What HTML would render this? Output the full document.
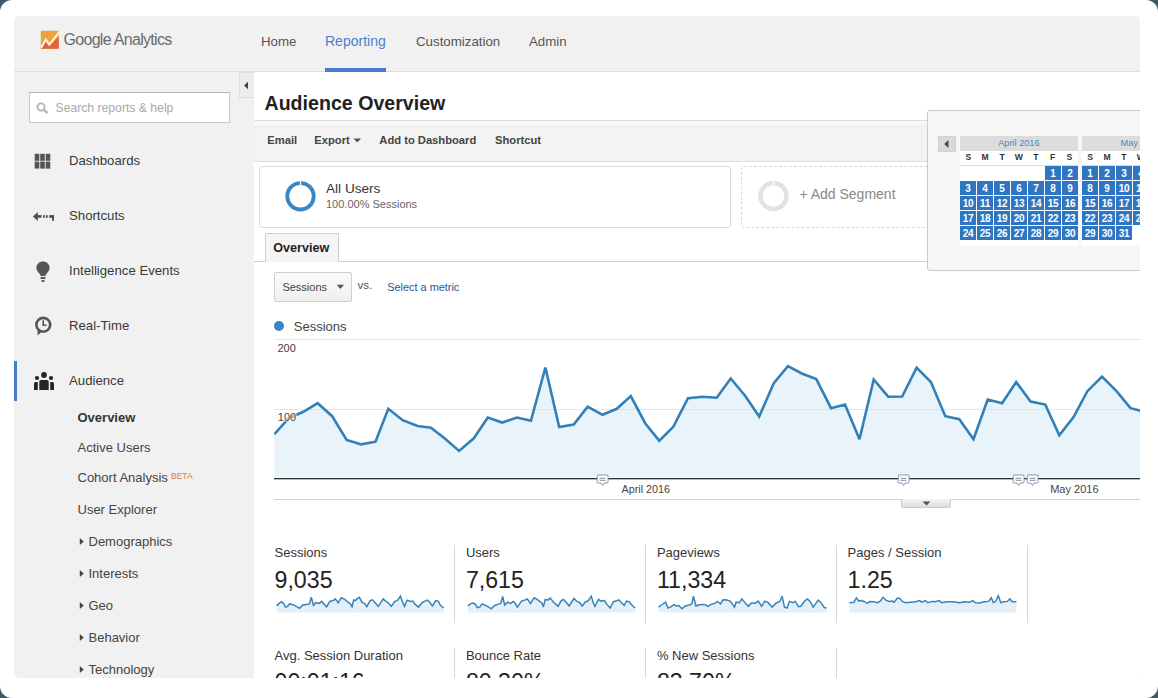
<!DOCTYPE html>
<html><head><meta charset="utf-8"><style>
html,body{margin:0;padding:0;width:1158px;height:698px;overflow:hidden;background:#fff}
body{position:relative;font-family:"Liberation Sans", sans-serif}
.b{position:absolute}
.t{position:absolute;white-space:nowrap}
</style></head><body>
<div class="b" style="left:0;top:0;width:1158px;height:698px;background:#3e5a64"></div>
<div class="b" style="left:0;top:0;width:1158px;height:698px;background:#fff;border-radius:12px"></div>
<div class="b" id="win" style="left:14px;top:16px;width:1126px;height:662px;background:#f1f1f1;border-radius:5px;overflow:hidden">
</div>
<div class="b" style="left:14px;top:16px;width:1126px;height:662px;border-radius:5px;overflow:hidden"><div class="b" style="left:-14px;top:-16px;width:1158px;height:698px">
<div class="b" style="left:14px;top:71px;width:1126px;height:1px;background:#dedede"></div>
<svg class="b" style="left:40px;top:30px" width="20" height="20" viewBox="0 0 20 20">
<rect x="0.8" y="0.8" width="18" height="18" rx="1" fill="#eda23c"/>
<path d="M0.8 18.8 L0.8 16.5 L5.8 11.2 L9.3 16.2 L18.8 6.5 L18.8 18.8 Z" fill="#e2653a"/>
<path d="M1.2 17.8 L5.8 9.6 L9.3 14.6 L19.2 2.2" stroke="#fdf3e6" stroke-width="2" fill="none" stroke-linejoin="miter"/>
</svg>
<div class="t" style="left:63.50px;top:31.96px;font-size:16px;line-height:16px;color:#6b6b6b;letter-spacing:-0.7px">Google Analytics</div>
<div class="t" style="left:261.00px;top:34.74px;font-size:13.3px;line-height:13.3px;color:#555;">Home</div>
<div class="t" style="left:325.00px;top:34.15px;font-size:14px;line-height:14px;color:#4a7fcf;">Reporting</div>
<div class="t" style="left:416.00px;top:34.74px;font-size:13.3px;line-height:13.3px;color:#555;">Customization</div>
<div class="t" style="left:529.00px;top:34.74px;font-size:13.3px;line-height:13.3px;color:#555;">Admin</div>
<div class="b" style="left:325px;top:68px;width:61px;height:4px;background:#4a7bd4"></div>
<div class="b" style="left:29px;top:92px;width:201px;height:31px;background:#fff;border:1px solid #c9c9c9;border-top-color:#b5b5b5;box-sizing:border-box"></div>
<svg class="b" style="left:36px;top:102px" width="14" height="12" viewBox="0 0 14 12">
<circle cx="5" cy="5" r="3.6" stroke="#b3b3b3" stroke-width="1.8" fill="none"/>
<path d="M7.6 7.6 L11.5 11" stroke="#b3b3b3" stroke-width="2.4"/>
</svg>
<div class="t" style="left:55.50px;top:101.97px;font-size:12.2px;line-height:12.2px;color:#a9a9a9;">Search reports &amp; help</div>
<div class="t" style="left:69.00px;top:153.83px;font-size:13.2px;line-height:13.2px;color:#383838;">Dashboards</div>
<div class="t" style="left:69.00px;top:208.83px;font-size:13.2px;line-height:13.2px;color:#383838;">Shortcuts</div>
<div class="t" style="left:69.00px;top:263.83px;font-size:13.2px;line-height:13.2px;color:#383838;">Intelligence Events</div>
<div class="t" style="left:69.00px;top:318.83px;font-size:13.2px;line-height:13.2px;color:#383838;">Real-Time</div>
<div class="t" style="left:69.00px;top:373.83px;font-size:13.2px;line-height:13.2px;color:#383838;">Audience</div>
<svg class="b" style="left:34px;top:153px" width="18" height="17" viewBox="0 0 18 17">
<g fill="#555">
<rect x="0.7" y="0.8" width="4.6" height="7" /><rect x="6.2" y="0.8" width="4.6" height="7"/><rect x="11.7" y="0.8" width="4.6" height="7"/>
<rect x="0.7" y="8.6" width="4.6" height="7" /><rect x="6.2" y="8.6" width="4.6" height="7"/><rect x="11.7" y="8.6" width="4.6" height="7"/>
</g></svg>
<svg class="b" style="left:32px;top:210px" width="24" height="13" viewBox="0 0 24 13">
<g fill="#4f4f4f">
<path d="M0.8 6.5 L5.9 2.1 L5.9 10.9 Z"/>
<rect x="5.5" y="5.1" width="4" height="2.7"/>
<rect x="11.1" y="5.1" width="1.7" height="2.7"/><rect x="13.9" y="5.1" width="1.8" height="2.7"/>
<rect x="17.2" y="5.1" width="4.8" height="2.7"/><rect x="20.1" y="5.1" width="1.9" height="5.7"/>
</g></svg>
<svg class="b" style="left:35px;top:260px" width="16" height="24" viewBox="0 0 16 24">
<g fill="#555">
<path d="M8 1.6 C4.3 1.6 1.4 4.3 1.4 7.9 C1.4 10.6 3.3 12.2 4.6 13.7 C5.3 14.6 5.6 15.2 5.6 16 L10.4 16 C10.4 15.2 10.7 14.6 11.4 13.7 C12.7 12.2 14.6 10.6 14.6 7.9 C14.6 4.3 11.7 1.6 8 1.6 Z"/>
<rect x="5.6" y="17" width="4.8" height="2"/><rect x="6.6" y="20" width="2.8" height="2"/>
</g></svg>
<svg class="b" style="left:34px;top:315px" width="20" height="22" viewBox="0 0 20 22">
<circle cx="9.3" cy="9.8" r="6.9" stroke="#555" stroke-width="2.6" fill="none"/>
<path d="M3.6 13.5 L3.6 20.5 L8.5 16" fill="#555"/>
<path d="M9.2 5.3 L9.2 10.3 L12.6 10.3" stroke="#555" stroke-width="1.6" fill="none"/>
</svg>
<svg class="b" style="left:33px;top:371px" width="22" height="20" viewBox="0 0 22 20">
<g fill="#252525">
<circle cx="11" cy="4" r="2.9"/><circle cx="4" cy="7" r="2.1"/><circle cx="18" cy="7" r="2.1"/>
<path d="M6.3 10.5 Q6.3 9 7.8 9 L14.2 9 Q15.7 9 15.7 10.5 L15.7 19 L6.3 19 Z"/>
<path d="M1 12.5 Q1 11 2.5 11 L4.8 11 L4.8 19 L1 19 Z"/>
<path d="M17.2 11 L19.5 11 Q21 11 21 12.5 L21 19 L17.2 19 Z"/>
</g></svg>
<div class="b" style="left:14px;top:361px;width:3px;height:40px;background:#4a7bd4"></div>
<div class="t" style="left:77.50px;top:411.40px;font-size:13px;line-height:13px;color:#333;font-weight:bold;">Overview</div>
<div class="t" style="left:77.50px;top:441.00px;font-size:13px;line-height:13px;color:#444;">Active Users</div>
<div class="t" style="left:77.50px;top:471.20px;font-size:13px;line-height:13px;color:#444;">Cohort Analysis</div>
<div class="t" style="left:171.00px;top:471.80px;font-size:8.5px;line-height:8.5px;color:#e07a3a;">BETA</div>
<div class="t" style="left:77.50px;top:503.00px;font-size:13px;line-height:13px;color:#444;">User Explorer</div>
<svg class="b" style="left:79px;top:537px" width="6" height="9" viewBox="0 0 6 9"><path d="M0.8 1 L4.8 4.5 L0.8 8 Z" fill="#444"/></svg>
<div class="t" style="left:88.50px;top:535.00px;font-size:13px;line-height:13px;color:#444;">Demographics</div>
<svg class="b" style="left:79px;top:569px" width="6" height="9" viewBox="0 0 6 9"><path d="M0.8 1 L4.8 4.5 L0.8 8 Z" fill="#444"/></svg>
<div class="t" style="left:88.50px;top:567.00px;font-size:13px;line-height:13px;color:#444;">Interests</div>
<svg class="b" style="left:79px;top:601px" width="6" height="9" viewBox="0 0 6 9"><path d="M0.8 1 L4.8 4.5 L0.8 8 Z" fill="#444"/></svg>
<div class="t" style="left:88.50px;top:599.00px;font-size:13px;line-height:13px;color:#444;">Geo</div>
<svg class="b" style="left:79px;top:633px" width="6" height="9" viewBox="0 0 6 9"><path d="M0.8 1 L4.8 4.5 L0.8 8 Z" fill="#444"/></svg>
<div class="t" style="left:88.50px;top:631.00px;font-size:13px;line-height:13px;color:#444;">Behavior</div>
<svg class="b" style="left:79px;top:665px" width="6" height="9" viewBox="0 0 6 9"><path d="M0.8 1 L4.8 4.5 L0.8 8 Z" fill="#444"/></svg>
<div class="t" style="left:88.50px;top:663.00px;font-size:13px;line-height:13px;color:#444;">Technology</div>
<div class="b" style="left:239px;top:72px;width:15px;height:26px;background:#ededed;border:1px solid #dedede;border-right:none;box-sizing:border-box"></div>
<svg class="b" style="left:243px;top:81px" width="6" height="9" viewBox="0 0 6 9"><path d="M5 0.8 L1 4.5 L5 8.2 Z" fill="#444"/></svg>
<div class="b" style="left:254px;top:72px;width:886px;height:606px;background:#fff"></div>
<div class="t" style="left:264.50px;top:93.81px;font-size:19.6px;line-height:19.6px;color:#222;font-weight:bold;">Audience Overview</div>
<div class="b" style="left:254px;top:120px;width:886px;height:42px;background:#f3f3f3;border-top:1px solid #dcdcdc;border-bottom:1px solid #dcdcdc;box-sizing:border-box"></div>
<div class="t" style="left:267.30px;top:134.92px;font-size:11.2px;line-height:11.2px;color:#444;font-weight:bold;">Email</div>
<div class="t" style="left:314.30px;top:134.92px;font-size:11.2px;line-height:11.2px;color:#444;font-weight:bold;">Export</div>
<svg class="b" style="left:353px;top:138px" width="9" height="5" viewBox="0 0 9 5"><path d="M0.5 0.5 L8 0.5 L4.25 4.5 Z" fill="#555"/></svg>
<div class="t" style="left:379.30px;top:134.92px;font-size:11.2px;line-height:11.2px;color:#444;font-weight:bold;">Add to Dashboard</div>
<div class="t" style="left:495.00px;top:134.92px;font-size:11.2px;line-height:11.2px;color:#444;font-weight:bold;">Shortcut</div>
<div class="b" style="left:254px;top:121px;width:886px;height:5px;background:#f6f6f6;border-bottom:1px solid #ebebeb"></div>
<div class="b" style="left:259px;top:166px;width:472px;height:62px;border:1px solid #dcdcdc;border-radius:3px;box-sizing:border-box;background:#fff"></div>
<svg class="b" style="left:283px;top:179px" width="34" height="34" viewBox="0 0 34 34">
<circle cx="17.5" cy="17.3" r="13.2" stroke="#3a86c3" stroke-width="3.9" fill="none"/>
<rect x="16.9" y="1" width="1.2" height="7" fill="#fff"/>
</svg>
<div class="t" style="left:326.00px;top:182.39px;font-size:13.6px;line-height:13.6px;color:#333;">All Users</div>
<div class="t" style="left:326.00px;top:198.69px;font-size:11px;line-height:11px;color:#666;">100.00% Sessions</div>
<div class="b" style="left:741px;top:166px;width:259px;height:62px;border:1px dashed #d8d8d8;border-radius:3px;box-sizing:border-box;background:#fff"></div>
<svg class="b" style="left:757px;top:180px" width="34" height="34" viewBox="0 0 34 34">
<circle cx="16.5" cy="16" r="13" stroke="#e2e2e2" stroke-width="4.5" fill="none"/><rect x="15.9" y="0" width="1.2" height="6" fill="#fff"/>
</svg>
<div class="t" style="left:799.40px;top:187.15px;font-size:14px;line-height:14px;color:#888;">+ Add Segment</div>
<div class="b" style="left:254px;top:261px;width:886px;height:1px;background:#cfcfcf"></div>
<div class="b" style="left:265px;top:233px;width:74px;height:29px;background:#f5f5f5;border:1px solid #cfcfcf;border-bottom:none;border-radius:2px 2px 0 0;box-sizing:border-box"></div>
<div class="t" style="left:273.30px;top:241.53px;font-size:12.6px;line-height:12.6px;color:#222;font-weight:bold;">Overview</div>
<div class="b" style="left:274px;top:272px;width:78px;height:30px;background:linear-gradient(#fbfbfb,#efefef);border:1px solid #cfcfcf;border-radius:2px;box-sizing:border-box"></div>
<div class="t" style="left:282.40px;top:281.89px;font-size:11px;line-height:11px;color:#444;">Sessions</div>
<svg class="b" style="left:336px;top:284px" width="9" height="6" viewBox="0 0 9 6"><path d="M0.8 0.8 L8 0.8 L4.4 5 Z" fill="#555"/></svg>
<div class="t" style="left:357.50px;top:279.97px;font-size:11.5px;line-height:11.5px;color:#555;">vs.</div>
<div class="t" style="left:387.30px;top:281.97px;font-size:10.9px;line-height:10.9px;color:#2b5797;">Select a metric</div>
<div class="b" style="left:273.7px;top:321.2px;width:10px;height:10px;border-radius:50%;background:#3a84c2"></div>
<div class="t" style="left:293.80px;top:319.50px;font-size:13px;line-height:13px;color:#444;">Sessions</div>
<svg class="b" style="left:0;top:0" width="1158" height="698" viewBox="0 0 1158 698">
<defs><clipPath id="cc"><rect x="274" y="300" width="866" height="220"/></clipPath></defs>
<g clip-path="url(#cc)">
<rect x="274" y="339" width="866" height="1" fill="#e6e6e6"/>
<path d="M274.4,477 L274.4,434.2 L288.8,418.2 L303.3,411.8 L317.7,403.2 L332.2,416.2 L346.6,439.9 L361.0,444.3 L375.5,441.7 L388.3,408.8 L402.7,420.2 L417.5,426.0 L431.0,427.8 L445.1,438.7 L459.1,450.9 L473.8,438.3 L487.8,417.6 L502.2,422.6 L516.9,417.6 L530.9,420.8 L545.4,367.5 L559.2,427.0 L573.7,424.6 L587.7,406.6 L602.5,414.8 L616.8,408.8 L630.8,396.1 L645.2,423.2 L659.3,440.7 L673.3,426.8 L688.0,398.2 L702.4,396.7 L716.7,397.7 L730.7,378.5 L745.1,395.7 L759.2,416.6 L773.8,383.1 L787.9,366.1 L802.3,373.7 L816.3,379.1 L831.0,408.2 L845.0,404.6 L859.5,439.3 L873.7,379.5 L888.2,396.7 L902.2,396.5 L916.6,367.7 L930.9,382.1 L945.3,416.2 L959.3,419.2 L973.5,439.3 L987.7,399.6 L1002.1,403.2 L1016.2,382.1 L1030.6,401.6 L1045.3,404.6 L1059.3,435.3 L1073.4,417.3 L1087.4,391.2 L1102.0,376.5 L1116.5,391.2 L1130.5,408.2 L1145.0,412.0 L1145,477 Z" fill="#e9f3fa"/>
<rect x="274" y="409" width="866" height="1" fill="#dcdcdc" opacity="0.7"/>
<polyline points="274.4,434.2 288.8,418.2 303.3,411.8 317.7,403.2 332.2,416.2 346.6,439.9 361.0,444.3 375.5,441.7 388.3,408.8 402.7,420.2 417.5,426.0 431.0,427.8 445.1,438.7 459.1,450.9 473.8,438.3 487.8,417.6 502.2,422.6 516.9,417.6 530.9,420.8 545.4,367.5 559.2,427.0 573.7,424.6 587.7,406.6 602.5,414.8 616.8,408.8 630.8,396.1 645.2,423.2 659.3,440.7 673.3,426.8 688.0,398.2 702.4,396.7 716.7,397.7 730.7,378.5 745.1,395.7 759.2,416.6 773.8,383.1 787.9,366.1 802.3,373.7 816.3,379.1 831.0,408.2 845.0,404.6 859.5,439.3 873.7,379.5 888.2,396.7 902.2,396.5 916.6,367.7 930.9,382.1 945.3,416.2 959.3,419.2 973.5,439.3 987.7,399.6 1002.1,403.2 1016.2,382.1 1030.6,401.6 1045.3,404.6 1059.3,435.3 1073.4,417.3 1087.4,391.2 1102.0,376.5 1116.5,391.2 1130.5,408.2 1145.0,412.0" fill="none" stroke="#3280b8" stroke-width="2.6" stroke-linejoin="miter" stroke-miterlimit="3"/>
<rect x="274" y="477" width="866" height="1" fill="#fafcfd"/><rect x="274" y="478" width="866" height="1" fill="#2e2e2e"/><rect x="274" y="479" width="866" height="0.5" fill="#777"/>
<rect x="274" y="499" width="866" height="1" fill="#d3d3d3"/>
</g></svg>
<div class="t" style="left:277.50px;top:342.69px;font-size:11px;line-height:11px;color:#444;">200</div>
<div class="t" style="left:277.80px;top:412.19px;font-size:11px;line-height:11px;color:#444;text-shadow:0 0 1.5px #fff,0 0 1.5px #fff,0 0 2px #fff,0 0 2px #fff">100</div>
<div class="t" style="left:621.50px;top:483.66px;font-size:10.8px;line-height:10.8px;color:#444;">April 2016</div>
<div class="t" style="left:1050.20px;top:484.49px;font-size:11px;line-height:11px;color:#444;">May 2016</div>
<svg class="b" style="left:596px;top:473.5px" width="13" height="13" viewBox="0 0 13 13">
<path d="M1.5 1.5 Q1 1 2 1 L11 1 Q12 1 12 2 L12 8 Q12 9 11 9 L8 9 L6.5 11.5 L5 9 L2 9 Q1 9 1 8 Z" fill="#fff" stroke="#8a99ab" stroke-width="1"/>
<rect x="3.5" y="3.8" width="6" height="1" fill="#7f8fa3"/><rect x="3.5" y="5.8" width="6" height="1" fill="#7f8fa3"/>
</svg>
<svg class="b" style="left:897px;top:473.5px" width="13" height="13" viewBox="0 0 13 13">
<path d="M1.5 1.5 Q1 1 2 1 L11 1 Q12 1 12 2 L12 8 Q12 9 11 9 L8 9 L6.5 11.5 L5 9 L2 9 Q1 9 1 8 Z" fill="#fff" stroke="#8a99ab" stroke-width="1"/>
<rect x="3.5" y="3.8" width="6" height="1" fill="#7f8fa3"/><rect x="3.5" y="5.8" width="6" height="1" fill="#7f8fa3"/>
</svg>
<svg class="b" style="left:1012px;top:473.5px" width="13" height="13" viewBox="0 0 13 13">
<path d="M1.5 1.5 Q1 1 2 1 L11 1 Q12 1 12 2 L12 8 Q12 9 11 9 L8 9 L6.5 11.5 L5 9 L2 9 Q1 9 1 8 Z" fill="#fff" stroke="#8a99ab" stroke-width="1"/>
<rect x="3.5" y="3.8" width="6" height="1" fill="#7f8fa3"/><rect x="3.5" y="5.8" width="6" height="1" fill="#7f8fa3"/>
</svg>
<svg class="b" style="left:1025.5px;top:473.5px" width="13" height="13" viewBox="0 0 13 13">
<path d="M1.5 1.5 Q1 1 2 1 L11 1 Q12 1 12 2 L12 8 Q12 9 11 9 L8 9 L6.5 11.5 L5 9 L2 9 Q1 9 1 8 Z" fill="#fff" stroke="#8a99ab" stroke-width="1"/>
<rect x="3.5" y="3.8" width="6" height="1" fill="#7f8fa3"/><rect x="3.5" y="5.8" width="6" height="1" fill="#7f8fa3"/>
</svg>
<div class="b" style="left:901px;top:499px;width:50px;height:9px;background:linear-gradient(#f4f4f4,#dedede);border:1px solid #cdcdcd;border-top:none;border-radius:0 0 2px 2px;box-sizing:border-box"></div>
<svg class="b" style="left:922px;top:501px" width="9" height="5" viewBox="0 0 9 5"><path d="M0.5 0.5 L8.5 0.5 L4.5 4.5 Z" fill="#555"/></svg>
<div class="b" style="left:454px;top:545px;width:1px;height:78px;background:#d6d6d6"></div>
<div class="b" style="left:645px;top:545px;width:1px;height:78px;background:#d6d6d6"></div>
<div class="b" style="left:836px;top:545px;width:1px;height:78px;background:#d6d6d6"></div>
<div class="b" style="left:1027px;top:545px;width:1px;height:78px;background:#d6d6d6"></div>
<div class="b" style="left:454px;top:648px;width:1px;height:30px;background:#d6d6d6"></div>
<div class="b" style="left:645px;top:648px;width:1px;height:30px;background:#d6d6d6"></div>
<div class="b" style="left:836px;top:648px;width:1px;height:30px;background:#d6d6d6"></div>
<div class="t" style="left:274.50px;top:546.20px;font-size:13px;line-height:13px;color:#333;">Sessions</div>
<div class="t" style="left:274.50px;top:568.56px;font-size:23.2px;line-height:23.2px;color:#222;">9,035</div>
<div class="t" style="left:465.90px;top:546.20px;font-size:13px;line-height:13px;color:#333;">Users</div>
<div class="t" style="left:465.90px;top:568.56px;font-size:23.2px;line-height:23.2px;color:#222;">7,615</div>
<div class="t" style="left:656.90px;top:546.20px;font-size:13px;line-height:13px;color:#333;">Pageviews</div>
<div class="t" style="left:656.90px;top:568.56px;font-size:23.2px;line-height:23.2px;color:#222;">11,334</div>
<div class="t" style="left:847.60px;top:546.20px;font-size:13px;line-height:13px;color:#333;">Pages / Session</div>
<div class="t" style="left:847.60px;top:568.56px;font-size:23.2px;line-height:23.2px;color:#222;">1.25</div>
<div class="t" style="left:274.50px;top:649.00px;font-size:13px;line-height:13px;color:#333;">Avg. Session Duration</div>
<div class="t" style="left:274.50px;top:671.26px;font-size:23.2px;line-height:23.2px;color:#222;">00:01:16</div>
<div class="t" style="left:465.90px;top:649.00px;font-size:13px;line-height:13px;color:#333;">Bounce Rate</div>
<div class="t" style="left:465.90px;top:671.26px;font-size:23.2px;line-height:23.2px;color:#222;">80.30%</div>
<div class="t" style="left:656.90px;top:649.00px;font-size:13px;line-height:13px;color:#333;">% New Sessions</div>
<div class="t" style="left:656.90px;top:671.26px;font-size:23.2px;line-height:23.2px;color:#222;">83.70%</div>
<svg class="b" style="left:0;top:0" width="1158" height="698" viewBox="0 0 1158 698"><path d="M276.6,612.5 L276.6,606.0 L279.0,603.4 L281.8,601.7 L283.9,603.9 L285.6,607.1 L287.2,606.7 L289.7,603.9 L293.0,604.7 L296.3,606.3 L299.5,608.3 L302.8,605.0 L306.1,604.4 L309.4,603.9 L311.3,597.3 L313.5,605.5 L315.9,602.7 L319.2,603.4 L321.7,601.4 L323.3,603.4 L326.6,606.7 L329.9,601.4 L333.2,600.6 L335.3,598.9 L338.1,602.7 L341.4,597.8 L344.7,599.4 L347.1,601.4 L350.4,603.9 L352.0,606.7 L353.7,599.8 L355.3,600.6 L357.0,598.9 L359.4,597.3 L361.9,602.2 L364.3,603.4 L366.8,606.7 L370.1,600.6 L372.5,599.8 L375.0,602.7 L378.3,606.3 L383.2,598.9 L385.7,601.1 L388.1,602.7 L391.4,606.3 L394.7,601.4 L397.2,600.6 L400.4,596.2 L402.9,603.0 L404.5,606.3 L407.0,600.1 L410.3,601.4 L412.7,601.1 L415.2,604.4 L418.5,607.1 L422.6,602.2 L425.0,601.1 L427.5,600.1 L430.0,602.7 L432.4,606.0 L435.7,600.6 L438.2,601.1 L440.6,605.5 L443.9,608.0 L443.9,612.5 Z" fill="#e5eff8"/><polyline points="276.6,606.0 279.0,603.4 281.8,601.7 283.9,603.9 285.6,607.1 287.2,606.7 289.7,603.9 293.0,604.7 296.3,606.3 299.5,608.3 302.8,605.0 306.1,604.4 309.4,603.9 311.3,597.3 313.5,605.5 315.9,602.7 319.2,603.4 321.7,601.4 323.3,603.4 326.6,606.7 329.9,601.4 333.2,600.6 335.3,598.9 338.1,602.7 341.4,597.8 344.7,599.4 347.1,601.4 350.4,603.9 352.0,606.7 353.7,599.8 355.3,600.6 357.0,598.9 359.4,597.3 361.9,602.2 364.3,603.4 366.8,606.7 370.1,600.6 372.5,599.8 375.0,602.7 378.3,606.3 383.2,598.9 385.7,601.1 388.1,602.7 391.4,606.3 394.7,601.4 397.2,600.6 400.4,596.2 402.9,603.0 404.5,606.3 407.0,600.1 410.3,601.4 412.7,601.1 415.2,604.4 418.5,607.1 422.6,602.2 425.0,601.1 427.5,600.1 430.0,602.7 432.4,606.0 435.7,600.6 438.2,601.1 440.6,605.5 443.9,608.0" fill="none" stroke="#3584bb" stroke-width="1.5" stroke-linejoin="miter" stroke-miterlimit="3"/></svg>
<svg class="b" style="left:0;top:0" width="1158" height="698" viewBox="0 0 1158 698"><path d="M467.9,612.5 L467.9,606.0 L470.2,603.9 L473.1,603.0 L475.6,604.4 L477.2,607.6 L479.7,607.1 L482.1,603.9 L484.6,605.0 L487.9,606.7 L491.2,608.8 L494.5,605.5 L497.7,604.4 L500.7,603.4 L502.7,596.5 L504.6,605.0 L507.6,602.2 L510.9,603.4 L513.3,601.4 L515.0,603.0 L517.4,607.1 L521.5,601.1 L524.8,600.1 L527.3,598.9 L530.5,603.4 L534.2,597.8 L537.1,599.4 L539.6,601.4 L542.0,603.0 L543.3,607.1 L545.3,599.4 L547.8,600.1 L550.2,598.1 L553.5,602.2 L556.0,604.4 L558.1,606.3 L560.9,601.1 L563.4,599.4 L566.6,602.7 L569.1,606.0 L574.0,598.5 L576.5,601.1 L579.8,602.7 L582.2,606.0 L585.5,601.7 L588.0,601.1 L591.3,596.2 L593.2,602.7 L594.9,606.3 L598.6,599.4 L601.1,601.1 L604.4,600.6 L606.8,604.4 L610.1,608.0 L613.4,601.7 L615.9,601.1 L618.8,599.8 L621.6,602.7 L624.1,605.5 L626.5,601.1 L629.0,601.7 L632.3,605.5 L635.2,608.0 L635.2,612.5 Z" fill="#e5eff8"/><polyline points="467.9,606.0 470.2,603.9 473.1,603.0 475.6,604.4 477.2,607.6 479.7,607.1 482.1,603.9 484.6,605.0 487.9,606.7 491.2,608.8 494.5,605.5 497.7,604.4 500.7,603.4 502.7,596.5 504.6,605.0 507.6,602.2 510.9,603.4 513.3,601.4 515.0,603.0 517.4,607.1 521.5,601.1 524.8,600.1 527.3,598.9 530.5,603.4 534.2,597.8 537.1,599.4 539.6,601.4 542.0,603.0 543.3,607.1 545.3,599.4 547.8,600.1 550.2,598.1 553.5,602.2 556.0,604.4 558.1,606.3 560.9,601.1 563.4,599.4 566.6,602.7 569.1,606.0 574.0,598.5 576.5,601.1 579.8,602.7 582.2,606.0 585.5,601.7 588.0,601.1 591.3,596.2 593.2,602.7 594.9,606.3 598.6,599.4 601.1,601.1 604.4,600.6 606.8,604.4 610.1,608.0 613.4,601.7 615.9,601.1 618.8,599.8 621.6,602.7 624.1,605.5 626.5,601.1 629.0,601.7 632.3,605.5 635.2,608.0" fill="none" stroke="#3584bb" stroke-width="1.5" stroke-linejoin="miter" stroke-miterlimit="3"/></svg>
<svg class="b" style="left:0;top:0" width="1158" height="698" viewBox="0 0 1158 698"><path d="M658.5,612.5 L658.5,607.1 L661.5,605.0 L665.6,602.2 L668.0,608.0 L670.5,607.1 L673.8,604.7 L676.3,606.0 L678.7,605.5 L682.0,608.8 L685.3,606.0 L689.4,605.0 L691.8,603.9 L693.5,596.2 L695.9,606.0 L699.2,604.7 L704.1,604.4 L708.2,606.3 L710.7,604.4 L714.8,603.4 L717.3,601.4 L720.5,603.9 L723.0,599.8 L727.1,600.1 L730.4,601.4 L734.5,607.1 L736.1,602.2 L739.4,602.7 L741.9,598.9 L745.2,603.0 L748.4,606.3 L751.7,602.7 L755.0,603.4 L758.3,601.1 L761.6,606.3 L764.8,601.1 L768.1,602.7 L772.2,607.1 L776.3,603.0 L779.6,601.7 L782.1,596.2 L784.5,607.1 L787.0,608.0 L789.5,601.4 L792.7,602.7 L795.2,601.4 L798.5,606.7 L800.9,606.3 L805.0,600.6 L807.5,598.9 L810.0,601.4 L813.2,607.1 L818.2,600.1 L820.6,602.2 L823.9,607.1 L826.4,608.3 L826.4,612.5 Z" fill="#e5eff8"/><polyline points="658.5,607.1 661.5,605.0 665.6,602.2 668.0,608.0 670.5,607.1 673.8,604.7 676.3,606.0 678.7,605.5 682.0,608.8 685.3,606.0 689.4,605.0 691.8,603.9 693.5,596.2 695.9,606.0 699.2,604.7 704.1,604.4 708.2,606.3 710.7,604.4 714.8,603.4 717.3,601.4 720.5,603.9 723.0,599.8 727.1,600.1 730.4,601.4 734.5,607.1 736.1,602.2 739.4,602.7 741.9,598.9 745.2,603.0 748.4,606.3 751.7,602.7 755.0,603.4 758.3,601.1 761.6,606.3 764.8,601.1 768.1,602.7 772.2,607.1 776.3,603.0 779.6,601.7 782.1,596.2 784.5,607.1 787.0,608.0 789.5,601.4 792.7,602.7 795.2,601.4 798.5,606.7 800.9,606.3 805.0,600.6 807.5,598.9 810.0,601.4 813.2,607.1 818.2,600.1 820.6,602.2 823.9,607.1 826.4,608.3" fill="none" stroke="#3584bb" stroke-width="1.5" stroke-linejoin="miter" stroke-miterlimit="3"/></svg>
<svg class="b" style="left:0;top:0" width="1158" height="698" viewBox="0 0 1158 698"><path d="M849.5,612.5 L849.5,602.7 L853.9,602.2 L856.4,598.1 L858.9,601.1 L861.3,600.6 L864.6,601.7 L867.6,603.4 L869.5,601.4 L873.6,601.7 L877.7,602.7 L880.2,601.1 L883.0,597.3 L885.9,600.1 L889.2,601.4 L892.2,601.1 L894.1,602.2 L897.4,598.1 L899.9,598.5 L902.3,601.4 L905.6,602.7 L910.5,602.2 L915.5,601.7 L919.6,600.6 L922.0,602.2 L925.3,600.6 L927.8,602.7 L931.9,601.4 L935.2,601.7 L939.3,600.6 L941.7,602.7 L946.6,601.7 L953.2,601.7 L959.8,602.7 L964.7,601.7 L969.6,602.2 L972.9,600.6 L975.4,602.7 L979.5,603.0 L984.4,601.7 L988.5,601.4 L991.3,597.8 L993.4,602.7 L995.9,601.1 L998.3,595.7 L1000.8,602.7 L1004.1,601.7 L1007.4,601.4 L1009.8,598.9 L1012.3,601.7 L1016.4,601.7 L1016.4,612.5 Z" fill="#e5eff8"/><polyline points="849.5,602.7 853.9,602.2 856.4,598.1 858.9,601.1 861.3,600.6 864.6,601.7 867.6,603.4 869.5,601.4 873.6,601.7 877.7,602.7 880.2,601.1 883.0,597.3 885.9,600.1 889.2,601.4 892.2,601.1 894.1,602.2 897.4,598.1 899.9,598.5 902.3,601.4 905.6,602.7 910.5,602.2 915.5,601.7 919.6,600.6 922.0,602.2 925.3,600.6 927.8,602.7 931.9,601.4 935.2,601.7 939.3,600.6 941.7,602.7 946.6,601.7 953.2,601.7 959.8,602.7 964.7,601.7 969.6,602.2 972.9,600.6 975.4,602.7 979.5,603.0 984.4,601.7 988.5,601.4 991.3,597.8 993.4,602.7 995.9,601.1 998.3,595.7 1000.8,602.7 1004.1,601.7 1007.4,601.4 1009.8,598.9 1012.3,601.7 1016.4,601.7" fill="none" stroke="#3584bb" stroke-width="1.5" stroke-linejoin="miter" stroke-miterlimit="3"/></svg>
<div class="b" style="left:927px;top:110px;width:240px;height:161px;background:#f6f6f6;border:1px solid #c9c9c9;border-radius:3px;box-sizing:border-box"></div>
<div class="b" style="left:938px;top:136px;width:18px;height:16px;background:#d9d9d9;border:1px solid #cfcfcf;box-sizing:border-box"></div>
<svg class="b" style="left:943px;top:139px" width="7" height="10" viewBox="0 0 7 10"><path d="M5.5 1 L1.2 5 L5.5 9 Z" fill="#444"/></svg>
<div class="b" style="left:959.9px;top:136px;width:118.00000000000011px;height:15px;background:#dcdcdc"></div>
<div class="b" style="left:959.9px;top:151px;width:118.00000000000011px;height:95px;background:#fff"></div>
<div class="t" style="left:959.9px;top:136px;width:118px;text-align:center;font-size:9.2px;line-height:14px;color:#4a86c6">April 2016</div>
<div class="t" style="left:959.90px;top:151px;width:16.86px;text-align:center;font-size:8.6px;line-height:13px;font-weight:bold;color:#333">S</div>
<div class="t" style="left:976.76px;top:151px;width:16.86px;text-align:center;font-size:8.6px;line-height:13px;font-weight:bold;color:#333">M</div>
<div class="t" style="left:993.62px;top:151px;width:16.86px;text-align:center;font-size:8.6px;line-height:13px;font-weight:bold;color:#333">T</div>
<div class="t" style="left:1010.48px;top:151px;width:16.86px;text-align:center;font-size:8.6px;line-height:13px;font-weight:bold;color:#333">W</div>
<div class="t" style="left:1027.34px;top:151px;width:16.86px;text-align:center;font-size:8.6px;line-height:13px;font-weight:bold;color:#333">T</div>
<div class="t" style="left:1044.20px;top:151px;width:16.86px;text-align:center;font-size:8.6px;line-height:13px;font-weight:bold;color:#333">F</div>
<div class="t" style="left:1061.06px;top:151px;width:16.86px;text-align:center;font-size:8.6px;line-height:13px;font-weight:bold;color:#333">S</div>
<div class="b" style="left:959.9px;top:165px;width:118.00000000000011px;height:1px;background:#dedede"></div>
<div class="t" style="left:1045px;top:166px;width:16px;height:14px;background:#2f76c2;color:#fff;font-weight:bold;font-size:10px;line-height:15px;text-align:center;letter-spacing:-0.3px">1</div>
<div class="t" style="left:1062px;top:166px;width:16px;height:14px;background:#2f76c2;color:#fff;font-weight:bold;font-size:10px;line-height:15px;text-align:center;letter-spacing:-0.3px">2</div>
<div class="t" style="left:960px;top:181px;width:16px;height:14px;background:#2f76c2;color:#fff;font-weight:bold;font-size:10px;line-height:15px;text-align:center;letter-spacing:-0.3px">3</div>
<div class="t" style="left:977px;top:181px;width:16px;height:14px;background:#2f76c2;color:#fff;font-weight:bold;font-size:10px;line-height:15px;text-align:center;letter-spacing:-0.3px">4</div>
<div class="t" style="left:994px;top:181px;width:16px;height:14px;background:#2f76c2;color:#fff;font-weight:bold;font-size:10px;line-height:15px;text-align:center;letter-spacing:-0.3px">5</div>
<div class="t" style="left:1011px;top:181px;width:16px;height:14px;background:#2f76c2;color:#fff;font-weight:bold;font-size:10px;line-height:15px;text-align:center;letter-spacing:-0.3px">6</div>
<div class="t" style="left:1028px;top:181px;width:16px;height:14px;background:#2f76c2;color:#fff;font-weight:bold;font-size:10px;line-height:15px;text-align:center;letter-spacing:-0.3px">7</div>
<div class="t" style="left:1045px;top:181px;width:16px;height:14px;background:#2f76c2;color:#fff;font-weight:bold;font-size:10px;line-height:15px;text-align:center;letter-spacing:-0.3px">8</div>
<div class="t" style="left:1062px;top:181px;width:16px;height:14px;background:#2f76c2;color:#fff;font-weight:bold;font-size:10px;line-height:15px;text-align:center;letter-spacing:-0.3px">9</div>
<div class="t" style="left:960px;top:196px;width:16px;height:14px;background:#2f76c2;color:#fff;font-weight:bold;font-size:10px;line-height:15px;text-align:center;letter-spacing:-0.3px">10</div>
<div class="t" style="left:977px;top:196px;width:16px;height:14px;background:#2f76c2;color:#fff;font-weight:bold;font-size:10px;line-height:15px;text-align:center;letter-spacing:-0.3px">11</div>
<div class="t" style="left:994px;top:196px;width:16px;height:14px;background:#2f76c2;color:#fff;font-weight:bold;font-size:10px;line-height:15px;text-align:center;letter-spacing:-0.3px">12</div>
<div class="t" style="left:1011px;top:196px;width:16px;height:14px;background:#2f76c2;color:#fff;font-weight:bold;font-size:10px;line-height:15px;text-align:center;letter-spacing:-0.3px">13</div>
<div class="t" style="left:1028px;top:196px;width:16px;height:14px;background:#2f76c2;color:#fff;font-weight:bold;font-size:10px;line-height:15px;text-align:center;letter-spacing:-0.3px">14</div>
<div class="t" style="left:1045px;top:196px;width:16px;height:14px;background:#2f76c2;color:#fff;font-weight:bold;font-size:10px;line-height:15px;text-align:center;letter-spacing:-0.3px">15</div>
<div class="t" style="left:1062px;top:196px;width:16px;height:14px;background:#2f76c2;color:#fff;font-weight:bold;font-size:10px;line-height:15px;text-align:center;letter-spacing:-0.3px">16</div>
<div class="t" style="left:960px;top:211px;width:16px;height:14px;background:#2f76c2;color:#fff;font-weight:bold;font-size:10px;line-height:15px;text-align:center;letter-spacing:-0.3px">17</div>
<div class="t" style="left:977px;top:211px;width:16px;height:14px;background:#2f76c2;color:#fff;font-weight:bold;font-size:10px;line-height:15px;text-align:center;letter-spacing:-0.3px">18</div>
<div class="t" style="left:994px;top:211px;width:16px;height:14px;background:#2f76c2;color:#fff;font-weight:bold;font-size:10px;line-height:15px;text-align:center;letter-spacing:-0.3px">19</div>
<div class="t" style="left:1011px;top:211px;width:16px;height:14px;background:#2f76c2;color:#fff;font-weight:bold;font-size:10px;line-height:15px;text-align:center;letter-spacing:-0.3px">20</div>
<div class="t" style="left:1028px;top:211px;width:16px;height:14px;background:#2f76c2;color:#fff;font-weight:bold;font-size:10px;line-height:15px;text-align:center;letter-spacing:-0.3px">21</div>
<div class="t" style="left:1045px;top:211px;width:16px;height:14px;background:#2f76c2;color:#fff;font-weight:bold;font-size:10px;line-height:15px;text-align:center;letter-spacing:-0.3px">22</div>
<div class="t" style="left:1062px;top:211px;width:16px;height:14px;background:#2f76c2;color:#fff;font-weight:bold;font-size:10px;line-height:15px;text-align:center;letter-spacing:-0.3px">23</div>
<div class="t" style="left:960px;top:226px;width:16px;height:14px;background:#2f76c2;color:#fff;font-weight:bold;font-size:10px;line-height:15px;text-align:center;letter-spacing:-0.3px">24</div>
<div class="t" style="left:977px;top:226px;width:16px;height:14px;background:#2f76c2;color:#fff;font-weight:bold;font-size:10px;line-height:15px;text-align:center;letter-spacing:-0.3px">25</div>
<div class="t" style="left:994px;top:226px;width:16px;height:14px;background:#2f76c2;color:#fff;font-weight:bold;font-size:10px;line-height:15px;text-align:center;letter-spacing:-0.3px">26</div>
<div class="t" style="left:1011px;top:226px;width:16px;height:14px;background:#2f76c2;color:#fff;font-weight:bold;font-size:10px;line-height:15px;text-align:center;letter-spacing:-0.3px">27</div>
<div class="t" style="left:1028px;top:226px;width:16px;height:14px;background:#2f76c2;color:#fff;font-weight:bold;font-size:10px;line-height:15px;text-align:center;letter-spacing:-0.3px">28</div>
<div class="t" style="left:1045px;top:226px;width:16px;height:14px;background:#2f76c2;color:#fff;font-weight:bold;font-size:10px;line-height:15px;text-align:center;letter-spacing:-0.3px">29</div>
<div class="t" style="left:1062px;top:226px;width:16px;height:14px;background:#2f76c2;color:#fff;font-weight:bold;font-size:10px;line-height:15px;text-align:center;letter-spacing:-0.3px">30</div>
<div class="b" style="left:1081.8px;top:136px;width:118.0px;height:15px;background:#dcdcdc"></div>
<div class="b" style="left:1081.8px;top:151px;width:118.0px;height:95px;background:#fff"></div>
<div class="t" style="left:1081.8px;top:136px;width:118px;text-align:center;font-size:9.2px;line-height:14px;color:#4a86c6">May 2016</div>
<div class="t" style="left:1081.80px;top:151px;width:16.86px;text-align:center;font-size:8.6px;line-height:13px;font-weight:bold;color:#333">S</div>
<div class="t" style="left:1098.66px;top:151px;width:16.86px;text-align:center;font-size:8.6px;line-height:13px;font-weight:bold;color:#333">M</div>
<div class="t" style="left:1115.52px;top:151px;width:16.86px;text-align:center;font-size:8.6px;line-height:13px;font-weight:bold;color:#333">T</div>
<div class="t" style="left:1132.38px;top:151px;width:16.86px;text-align:center;font-size:8.6px;line-height:13px;font-weight:bold;color:#333">W</div>
<div class="t" style="left:1149.24px;top:151px;width:16.86px;text-align:center;font-size:8.6px;line-height:13px;font-weight:bold;color:#333">T</div>
<div class="t" style="left:1166.10px;top:151px;width:16.86px;text-align:center;font-size:8.6px;line-height:13px;font-weight:bold;color:#333">F</div>
<div class="t" style="left:1182.96px;top:151px;width:16.86px;text-align:center;font-size:8.6px;line-height:13px;font-weight:bold;color:#333">S</div>
<div class="b" style="left:1081.8px;top:165px;width:118.0px;height:1px;background:#dedede"></div>
<div class="t" style="left:1082px;top:166px;width:16px;height:14px;background:#2f76c2;color:#fff;font-weight:bold;font-size:10px;line-height:15px;text-align:center;letter-spacing:-0.3px">1</div>
<div class="t" style="left:1099px;top:166px;width:16px;height:14px;background:#2f76c2;color:#fff;font-weight:bold;font-size:10px;line-height:15px;text-align:center;letter-spacing:-0.3px">2</div>
<div class="t" style="left:1116px;top:166px;width:16px;height:14px;background:#2f76c2;color:#fff;font-weight:bold;font-size:10px;line-height:15px;text-align:center;letter-spacing:-0.3px">3</div>
<div class="t" style="left:1133px;top:166px;width:16px;height:14px;background:#2f76c2;color:#fff;font-weight:bold;font-size:10px;line-height:15px;text-align:center;letter-spacing:-0.3px">4</div>
<div class="t" style="left:1150px;top:166px;width:16px;height:14px;background:#2f76c2;color:#fff;font-weight:bold;font-size:10px;line-height:15px;text-align:center;letter-spacing:-0.3px">5</div>
<div class="t" style="left:1167px;top:166px;width:16px;height:14px;background:#2f76c2;color:#fff;font-weight:bold;font-size:10px;line-height:15px;text-align:center;letter-spacing:-0.3px">6</div>
<div class="t" style="left:1184px;top:166px;width:16px;height:14px;background:#2f76c2;color:#fff;font-weight:bold;font-size:10px;line-height:15px;text-align:center;letter-spacing:-0.3px">7</div>
<div class="t" style="left:1082px;top:181px;width:16px;height:14px;background:#2f76c2;color:#fff;font-weight:bold;font-size:10px;line-height:15px;text-align:center;letter-spacing:-0.3px">8</div>
<div class="t" style="left:1099px;top:181px;width:16px;height:14px;background:#2f76c2;color:#fff;font-weight:bold;font-size:10px;line-height:15px;text-align:center;letter-spacing:-0.3px">9</div>
<div class="t" style="left:1116px;top:181px;width:16px;height:14px;background:#2f76c2;color:#fff;font-weight:bold;font-size:10px;line-height:15px;text-align:center;letter-spacing:-0.3px">10</div>
<div class="t" style="left:1133px;top:181px;width:16px;height:14px;background:#2f76c2;color:#fff;font-weight:bold;font-size:10px;line-height:15px;text-align:center;letter-spacing:-0.3px">11</div>
<div class="t" style="left:1150px;top:181px;width:16px;height:14px;background:#2f76c2;color:#fff;font-weight:bold;font-size:10px;line-height:15px;text-align:center;letter-spacing:-0.3px">12</div>
<div class="t" style="left:1167px;top:181px;width:16px;height:14px;background:#2f76c2;color:#fff;font-weight:bold;font-size:10px;line-height:15px;text-align:center;letter-spacing:-0.3px">13</div>
<div class="t" style="left:1184px;top:181px;width:16px;height:14px;background:#2f76c2;color:#fff;font-weight:bold;font-size:10px;line-height:15px;text-align:center;letter-spacing:-0.3px">14</div>
<div class="t" style="left:1082px;top:196px;width:16px;height:14px;background:#2f76c2;color:#fff;font-weight:bold;font-size:10px;line-height:15px;text-align:center;letter-spacing:-0.3px">15</div>
<div class="t" style="left:1099px;top:196px;width:16px;height:14px;background:#2f76c2;color:#fff;font-weight:bold;font-size:10px;line-height:15px;text-align:center;letter-spacing:-0.3px">16</div>
<div class="t" style="left:1116px;top:196px;width:16px;height:14px;background:#2f76c2;color:#fff;font-weight:bold;font-size:10px;line-height:15px;text-align:center;letter-spacing:-0.3px">17</div>
<div class="t" style="left:1133px;top:196px;width:16px;height:14px;background:#2f76c2;color:#fff;font-weight:bold;font-size:10px;line-height:15px;text-align:center;letter-spacing:-0.3px">18</div>
<div class="t" style="left:1150px;top:196px;width:16px;height:14px;background:#2f76c2;color:#fff;font-weight:bold;font-size:10px;line-height:15px;text-align:center;letter-spacing:-0.3px">19</div>
<div class="t" style="left:1167px;top:196px;width:16px;height:14px;background:#2f76c2;color:#fff;font-weight:bold;font-size:10px;line-height:15px;text-align:center;letter-spacing:-0.3px">20</div>
<div class="t" style="left:1184px;top:196px;width:16px;height:14px;background:#2f76c2;color:#fff;font-weight:bold;font-size:10px;line-height:15px;text-align:center;letter-spacing:-0.3px">21</div>
<div class="t" style="left:1082px;top:211px;width:16px;height:14px;background:#2f76c2;color:#fff;font-weight:bold;font-size:10px;line-height:15px;text-align:center;letter-spacing:-0.3px">22</div>
<div class="t" style="left:1099px;top:211px;width:16px;height:14px;background:#2f76c2;color:#fff;font-weight:bold;font-size:10px;line-height:15px;text-align:center;letter-spacing:-0.3px">23</div>
<div class="t" style="left:1116px;top:211px;width:16px;height:14px;background:#2f76c2;color:#fff;font-weight:bold;font-size:10px;line-height:15px;text-align:center;letter-spacing:-0.3px">24</div>
<div class="t" style="left:1133px;top:211px;width:16px;height:14px;background:#2f76c2;color:#fff;font-weight:bold;font-size:10px;line-height:15px;text-align:center;letter-spacing:-0.3px">25</div>
<div class="t" style="left:1150px;top:211px;width:16px;height:14px;background:#2f76c2;color:#fff;font-weight:bold;font-size:10px;line-height:15px;text-align:center;letter-spacing:-0.3px">26</div>
<div class="t" style="left:1167px;top:211px;width:16px;height:14px;background:#2f76c2;color:#fff;font-weight:bold;font-size:10px;line-height:15px;text-align:center;letter-spacing:-0.3px">27</div>
<div class="t" style="left:1184px;top:211px;width:16px;height:14px;background:#2f76c2;color:#fff;font-weight:bold;font-size:10px;line-height:15px;text-align:center;letter-spacing:-0.3px">28</div>
<div class="t" style="left:1082px;top:226px;width:16px;height:14px;background:#2f76c2;color:#fff;font-weight:bold;font-size:10px;line-height:15px;text-align:center;letter-spacing:-0.3px">29</div>
<div class="t" style="left:1099px;top:226px;width:16px;height:14px;background:#2f76c2;color:#fff;font-weight:bold;font-size:10px;line-height:15px;text-align:center;letter-spacing:-0.3px">30</div>
<div class="t" style="left:1116px;top:226px;width:16px;height:14px;background:#2f76c2;color:#fff;font-weight:bold;font-size:10px;line-height:15px;text-align:center;letter-spacing:-0.3px">31</div>
</div></div>
</body></html>
